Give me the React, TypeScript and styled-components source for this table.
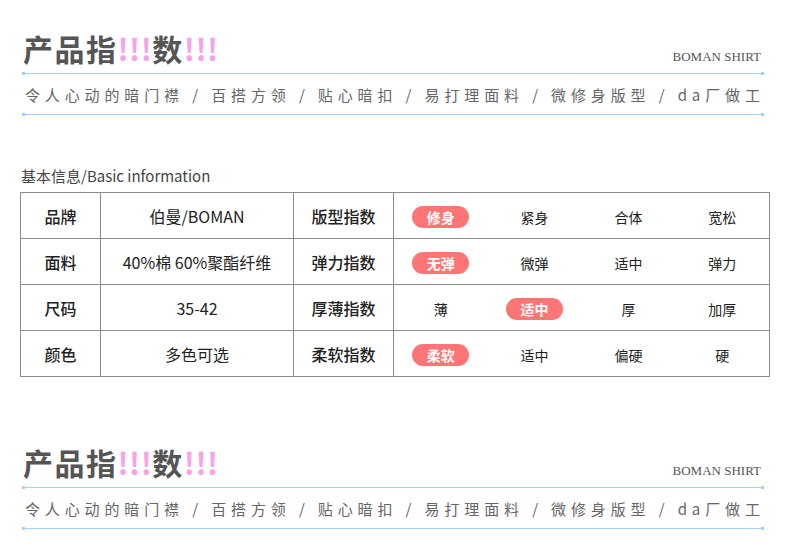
import React from 'react';
import styled, { createGlobalStyle } from 'styled-components';

const GlobalStyle = createGlobalStyle`
  html, body {
    margin: 0;
    padding: 0;
    background: #ffffff;
  }
  body {
    font-family: "Noto Sans CJK SC", "Noto Sans", sans-serif;
  }
`;

const Page = styled.div`
  width: 790px;
  height: 547px;
  overflow: hidden;
  background: #ffffff;
`;

const Header = styled.div<{ $top: number }>`
  width: 742px;
  margin: ${(p) => p.$top}px 0 0 22px;
`;

const TitleRow = styled.div`
  display: flex;
  justify-content: space-between;
  align-items: baseline;
  padding: 0 3px 0 1px;
  margin-bottom: 5px;
`;

const Title = styled.h1`
  margin: 0;
  font-size: 30px;
  line-height: 40px;
  font-weight: 700;
  color: #555555;
  letter-spacing: 1.5px;
`;

const Bang = styled.span`
  color: #f9a2e6;
  letter-spacing: 0.5px;
`;

const Brand = styled.span`
  font-family: "Liberation Serif", serif;
  font-size: 13px;
  color: #555555;
`;

const Rule = styled.div`
  position: relative;
  height: 1px;
  background: #a6d1f6;
  &::before,
  &::after {
    content: '';
    position: absolute;
    top: -1px;
    width: 3px;
    height: 3px;
    background: #a6d1f6;
  }
  &::before {
    left: 0;
  }
  &::after {
    right: 0;
  }
`;

const Slogan = styled.div`
  padding: 11px 0 9px 3px;
  font-size: 15px;
  line-height: 20px;
  color: #666666;
  letter-spacing: 4.87px;
  white-space: nowrap;
`;

const InfoLabel = styled.div`
  margin: 51px 0 6px 21px;
  font-size: 15px;
  line-height: 20px;
  color: #444444;
`;

const Table = styled.table`
  margin-left: 20px;
  width: 749px;
  border-collapse: collapse;
  table-layout: fixed;
  border: 1px solid #8c8c8c;
`;

const Row = styled.tr`
  height: 46px;
  & + & td {
    border-top: 1px solid #8c8c8c;
  }
`;

const Cell = styled.td<{ $strong?: boolean; $divider?: boolean }>`
  padding: 0;
  text-align: center;
  vertical-align: middle;
  font-size: 16px;
  color: #222222;
  font-weight: ${(p) => (p.$strong ? 500 : 400)};
  border-right: ${(p) => (p.$divider ? '1px solid #8c8c8c' : 'none')};
`;

const Option = styled.span<{ $on?: boolean }>`
  display: inline-block;
  width: ${(p) => (p.$on ? '57px' : 'auto')};
  height: 22px;
  line-height: 22px;
  border-radius: 11px;
  font-size: 14px;
  font-weight: ${(p) => (p.$on ? 700 : 400)};
  color: ${(p) => (p.$on ? '#ffffff' : '#222222')};
  background: ${(p) => (p.$on ? '#ff7575' : 'transparent')};
`;

const slogan = '令人心动的暗门襟 / 百搭方领 / 贴心暗扣 / 易打理面料 / 微修身版型 / da厂做工';

const rows = [
  { label: '品牌', value: '伯曼/BOMAN', index: '版型指数', options: ['修身', '紧身', '合体', '宽松'], on: 0 },
  { label: '面料', value: '40%棉 60%聚酯纤维', index: '弹力指数', options: ['无弹', '微弹', '适中', '弹力'], on: 0 },
  { label: '尺码', value: '35-42', index: '厚薄指数', options: ['薄', '适中', '厚', '加厚'], on: 1 },
  { label: '颜色', value: '多色可选', index: '柔软指数', options: ['柔软', '适中', '偏硬', '硬'], on: 0 },
];

const widths = [80, 193, 100, 94, 94, 94, 94];

const SectionHeader: React.FC<{ top: number }> = ({ top }) => (
  <Header $top={top}>
    <TitleRow>
      <Title>
        产品指<Bang>!!!</Bang>数<Bang>!!!</Bang>
      </Title>
      <Brand>BOMAN SHIRT</Brand>
    </TitleRow>
    <Rule />
    <Slogan>{slogan}</Slogan>
    <Rule />
  </Header>
);

const App: React.FC = () => {
  return (
    <Page>
      <GlobalStyle />
      <SectionHeader top={28} />
      <InfoLabel>基本信息/Basic information</InfoLabel>
      <Table>
        <colgroup>
          {widths.map((w, i) => (
            <col key={i} style={{ width: w }} />
          ))}
        </colgroup>
        <tbody>
          {rows.map((r) => (
            <Row key={r.label}>
              <Cell $strong $divider>
                {r.label}
              </Cell>
              <Cell $divider>{r.value}</Cell>
              <Cell $strong $divider>
                {r.index}
              </Cell>
              {r.options.map((o, i) => (
                <Cell key={o + i}>
                  <Option $on={i === r.on}>{o}</Option>
                </Cell>
              ))}
            </Row>
          ))}
        </tbody>
      </Table>
      <SectionHeader top={65} />
    </Page>
  );
};

export default App;
